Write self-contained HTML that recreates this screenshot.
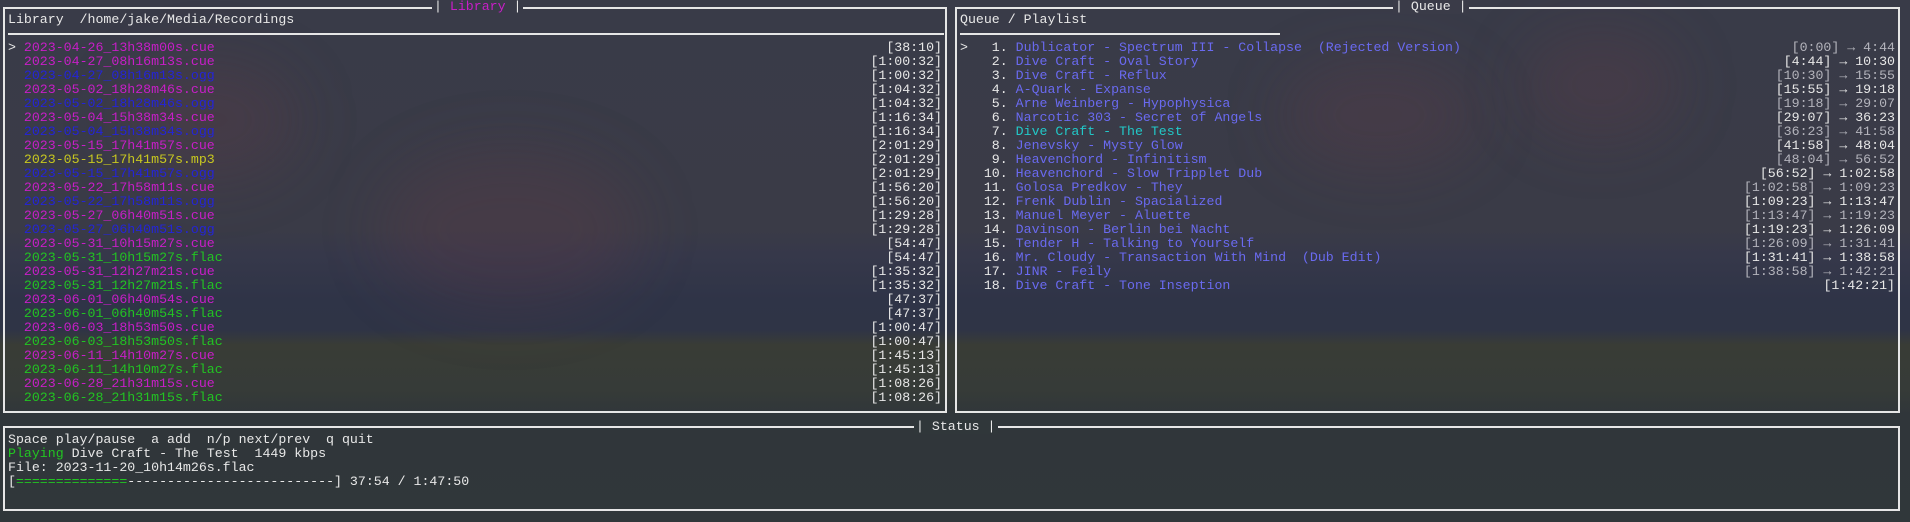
<!DOCTYPE html>
<html><head><meta charset="utf-8"><style>
*{margin:0;padding:0;box-sizing:border-box}
html,body{width:1910px;height:522px;overflow:hidden}
body{position:relative;font-family:"Liberation Mono","DejaVu Sans Mono",monospace;font-size:13.25px;line-height:14px;color:#e8e8e8;
background:linear-gradient(180deg,#393b48 0px,#3a3b47 230px,#36384a 255px,#2f3447 300px,#2f3446 330px,#393c36 345px,#363b38 390px,#30363a 415px,#30373a 522px);}
.blob{position:absolute;border-radius:50%;background:rgba(120,60,70,.18);filter:blur(30px)}
.box{position:absolute;border:2px solid #e6e6e6}
.t{position:absolute;white-space:pre;height:14px}
.r{text-align:right}
.lab{position:absolute;white-space:pre;top:0;height:14px;padding:0 2px}
.cue{color:#c81ec8}.ogg{color:#2424d8}.flac{color:#22c422}.mp3{color:#c8c820}
.q{color:#6a6af0}.cy{color:#22c8c8}.g{color:#22c422}.gr{color:#b4b4bc}
.rule{position:absolute;height:2px;background:#e6e6e6}
</style></head><body>
<div class="blob" style="left:380px;top:150px;width:260px;height:160px"></div>
<div class="blob" style="left:120px;top:60px;width:180px;height:120px"></div>
<div class="blob" style="left:1520px;top:30px;width:160px;height:110px"></div>
<div class="blob" style="left:1280px;top:60px;width:200px;height:110px"></div>

<div class="box" style="left:3px;top:7px;width:944px;height:406px"></div>
<div class="box" style="left:955px;top:7px;width:945px;height:406px"></div>
<div class="box" style="left:3px;top:426px;width:1897px;height:85px"></div>

<div class="lab" style="left:432px;background:#393b48">| <span class="cue">Library</span> |</div>
<div class="lab" style="left:1393px;background:#3a3b48">| Queue |</div>
<div class="lab" style="left:914px;top:420px;background:#30373a">| Status |</div>

<div class="t" style="left:8px;top:13px">Library  /home/jake/Media/Recordings</div>
<div class="rule" style="left:8px;top:33px;width:936px"></div>
<div class="t" style="left:960px;top:13px">Queue / Playlist</div>
<div class="rule" style="left:960px;top:33px;width:320px"></div>

<div class="t" style="left:8px;top:41px">&gt; <span class="cue">2023-04-26_13h38m00s.cue</span></div>
<div class="t" style="left:8px;top:55px">  <span class="cue">2023-04-27_08h16m13s.cue</span></div>
<div class="t" style="left:8px;top:69px">  <span class="ogg">2023-04-27_08h16m13s.ogg</span></div>
<div class="t" style="left:8px;top:83px">  <span class="cue">2023-05-02_18h28m46s.cue</span></div>
<div class="t" style="left:8px;top:97px">  <span class="ogg">2023-05-02_18h28m46s.ogg</span></div>
<div class="t" style="left:8px;top:111px">  <span class="cue">2023-05-04_15h38m34s.cue</span></div>
<div class="t" style="left:8px;top:125px">  <span class="ogg">2023-05-04_15h38m34s.ogg</span></div>
<div class="t" style="left:8px;top:139px">  <span class="cue">2023-05-15_17h41m57s.cue</span></div>
<div class="t" style="left:8px;top:153px">  <span class="mp3">2023-05-15_17h41m57s.mp3</span></div>
<div class="t" style="left:8px;top:167px">  <span class="ogg">2023-05-15_17h41m57s.ogg</span></div>
<div class="t" style="left:8px;top:181px">  <span class="cue">2023-05-22_17h58m11s.cue</span></div>
<div class="t" style="left:8px;top:195px">  <span class="ogg">2023-05-22_17h58m11s.ogg</span></div>
<div class="t" style="left:8px;top:209px">  <span class="cue">2023-05-27_06h40m51s.cue</span></div>
<div class="t" style="left:8px;top:223px">  <span class="ogg">2023-05-27_06h40m51s.ogg</span></div>
<div class="t" style="left:8px;top:237px">  <span class="cue">2023-05-31_10h15m27s.cue</span></div>
<div class="t" style="left:8px;top:251px">  <span class="flac">2023-05-31_10h15m27s.flac</span></div>
<div class="t" style="left:8px;top:265px">  <span class="cue">2023-05-31_12h27m21s.cue</span></div>
<div class="t" style="left:8px;top:279px">  <span class="flac">2023-05-31_12h27m21s.flac</span></div>
<div class="t" style="left:8px;top:293px">  <span class="cue">2023-06-01_06h40m54s.cue</span></div>
<div class="t" style="left:8px;top:307px">  <span class="flac">2023-06-01_06h40m54s.flac</span></div>
<div class="t" style="left:8px;top:321px">  <span class="cue">2023-06-03_18h53m50s.cue</span></div>
<div class="t" style="left:8px;top:335px">  <span class="flac">2023-06-03_18h53m50s.flac</span></div>
<div class="t" style="left:8px;top:349px">  <span class="cue">2023-06-11_14h10m27s.cue</span></div>
<div class="t" style="left:8px;top:363px">  <span class="flac">2023-06-11_14h10m27s.flac</span></div>
<div class="t" style="left:8px;top:377px">  <span class="cue">2023-06-28_21h31m15s.cue</span></div>
<div class="t" style="left:8px;top:391px">  <span class="flac">2023-06-28_21h31m15s.flac</span></div>

<div class="t r" style="right:968px;top:41px">[38:10]
[1:00:32]
[1:00:32]
[1:04:32]
[1:04:32]
[1:16:34]
[1:16:34]
[2:01:29]
[2:01:29]
[2:01:29]
[1:56:20]
[1:56:20]
[1:29:28]
[1:29:28]
[54:47]
[54:47]
[1:35:32]
[1:35:32]
[47:37]
[47:37]
[1:00:47]
[1:00:47]
[1:45:13]
[1:45:13]
[1:08:26]
[1:08:26]</div>

<div class="t" style="left:960px;top:41px;height:auto">&gt;   1. <span class="q">Dublicator - Spectrum III - Collapse  (Rejected Version)</span>
    2. <span class="q">Dive Craft - Oval Story</span>
    3. <span class="q">Dive Craft - Reflux</span>
    4. <span class="q">A-Quark - Expanse</span>
    5. <span class="q">Arne Weinberg - Hypophysica</span>
    6. <span class="q">Narcotic 303 - Secret of Angels</span>
    7. <span class="cy">Dive Craft - The Test</span>
    8. <span class="q">Jenevsky - Mysty Glow</span>
    9. <span class="q">Heavenchord - Infinitism</span>
   10. <span class="q">Heavenchord - Slow Tripplet Dub</span>
   11. <span class="q">Golosa Predkov - They</span>
   12. <span class="q">Frenk Dublin - Spacialized</span>
   13. <span class="q">Manuel Meyer - Aluette</span>
   14. <span class="q">Davinson - Berlin bei Nacht</span>
   15. <span class="q">Tender H - Talking to Yourself</span>
   16. <span class="q">Mr. Cloudy - Transaction With Mind  (Dub Edit)</span>
   17. <span class="q">JINR - Feily</span>
   18. <span class="q">Dive Craft - Tone Inseption</span></div>

<div class="t r" style="right:15px;top:41px;height:auto"><span class="gr">[0:00] → 4:44</span>
[4:44] → 10:30
<span class="gr">[10:30] → 15:55</span>
[15:55] → 19:18
<span class="gr">[19:18] → 29:07</span>
[29:07] → 36:23
<span class="gr">[36:23] → 41:58</span>
[41:58] → 48:04
<span class="gr">[48:04] → 56:52</span>
[56:52] → 1:02:58
<span class="gr">[1:02:58] → 1:09:23</span>
[1:09:23] → 1:13:47
<span class="gr">[1:13:47] → 1:19:23</span>
[1:19:23] → 1:26:09
<span class="gr">[1:26:09] → 1:31:41</span>
[1:31:41] → 1:38:58
<span class="gr">[1:38:58] → 1:42:21</span>
[1:42:21]</div>

<div class="t" style="left:8px;top:433px;height:auto">Space play/pause  a add  n/p next/prev  q quit
<span class="g">Playing</span> Dive Craft - The Test  1449 kbps
File: 2023-11-20_10h14m26s.flac
[<span class="g">==============</span>--------------------------] 37:54 / 1:47:50</div>
</body></html>
